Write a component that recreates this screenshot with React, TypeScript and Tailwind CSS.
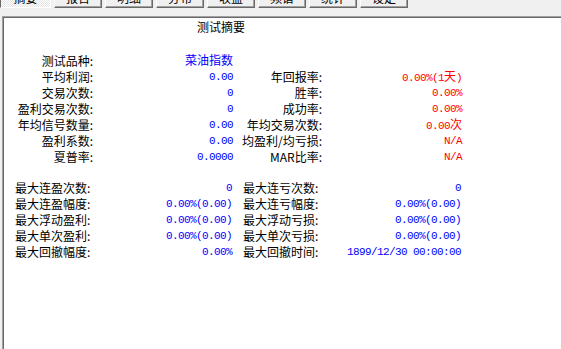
const tabs = ["摘要", "报告", "明细", "分布", "收益", "频谱", "统计", "设定"]

type Row = [string, string, string, string, "blue" | "red"]

const summary: Row[] = [
    ["测试品种:", "菜油指数", "", "", "blue"],
    ["平均利润:", "0.00", "年回报率:", "0.00%(1天)", "red"],
    ["交易次数:", "0", "胜率:", "0.00%", "red"],
    ["盈利交易次数:", "0", "成功率:", "0.00%", "red"],
    ["年均信号数量:", "0.00", "年均交易次数:", "0.00次", "red"],
    ["盈利系数:", "0.00", "均盈利/均亏损:", "N/A", "red"],
    ["夏普率:", "0.0000", "MAR比率:", "N/A", "red"],
]

const extremes: [string, string, string, string][] = [
    ["最大连盈次数:", "0", "最大连亏次数:", "0"],
    ["最大连盈幅度:", "0.00%(0.00)", "最大连亏幅度:", "0.00%(0.00)"],
    ["最大浮动盈利:", "0.00%(0.00)", "最大浮动亏损:", "0.00%(0.00)"],
    ["最大单次盈利:", "0.00%(0.00)", "最大单次亏损:", "0.00%(0.00)"],
    ["最大回撤幅度:", "0.00%", "最大回撤时间:", "1899/12/30 00:00:00"],
]

const label = "font-['Noto_Sans_CJK_SC',sans-serif] text-[12px] leading-[16px] text-black whitespace-nowrap"
const value = "font-['Liberation_Mono','Noto_Sans_CJK_SC',monospace] text-[11px] tracking-[-0.6px] leading-[16px] whitespace-nowrap text-right"

// digits stay narrow, CJK characters get their full 12px size
function Value({ text, className }: { text: string; className: string }) {
    const parts = text.split(/([\u4e00-\u9fff]+)/).filter(Boolean)
    return (
        <span className={`${value} ${className}`}>
            {parts.map((p, i) =>
                /[\u4e00-\u9fff]/.test(p) ? (
                    <span key={i} className="font-['Noto_Sans_CJK_SC',sans-serif] text-[12px] tracking-normal">
                        {p}
                    </span>
                ) : (
                    <span key={i}>{p}</span>
                )
            )}
        </span>
    )
}

function App() {
    return (
        <div className="flex h-[349px] w-[561px] flex-col overflow-hidden bg-[#f0f0f0] font-['Noto_Sans_CJK_SC',sans-serif]">
            <div className="flex h-[16px] shrink-0 gap-[3px]">
                {tabs.map((t, i) => (
                    <div
                        key={t}
                        className={
                            i === 0
                                ? "-mt-[16px] flex h-[24px] w-[51px] items-end justify-center border border-t-[#696969] border-l-[#696969] border-r-white border-b-white bg-[image:repeating-conic-gradient(#ffffff_0_25%,#e4e4e4_0_50%)] bg-[length:2px_2px] pb-[1px] text-[12px] leading-[16px] text-black"
                                : "-mt-[16px] flex h-[24px] w-[48px] items-end justify-center border border-t-white border-l-white border-r-[#696969] border-b-[#696969] bg-[#f0f0f0] pb-[1px] text-[12px] leading-[16px] text-black shadow-[inset_-1px_-1px_0_#a0a0a0]"
                        }
                    >
                        {t}
                    </div>
                ))}
            </div>
            <div className="ml-[2px] flex-1 border-t border-l border-[#a0a0a0] bg-white">
                <div className="h-full border-t border-l border-[#696969] pt-[1px]">
                    <div className={`${label} w-[434px] text-center`}>测试摘要</div>

                    <div className="mt-[18px] grid grid-cols-[89px_140px_89px_140px]">
                        {summary.map(([l1, v1, l2, v2, c]) => (
                            <div key={l1} className="contents">
                                <div className={`${label} text-right`}>{l1}</div>
                                <div className="flex h-[16px] items-center justify-end">
                                    <Value text={v1} className="text-[#0000ff]" />
                                </div>
                                <div className={`${label} text-right`}>{l2}</div>
                                <div className="flex h-[16px] items-center justify-end">
                                    <Value text={v2} className={c === "red" ? "text-[#ff0000]" : "text-[#0000ff]"} />
                                </div>
                            </div>
                        ))}
                    </div>

                    <div className="mt-[15px] grid grid-cols-[228px_218px] pl-[11px]">
                        {extremes.map(([l1, v1, l2, v2]) => (
                            <div key={l1} className="contents">
                                <div className="flex h-[16px] items-center justify-between pr-[11px]">
                                    <span className={label}>{l1}</span>
                                    <Value text={v1} className="text-[#0000ff]" />
                                </div>
                                <div className="flex h-[16px] items-center justify-between">
                                    <span className={label}>{l2}</span>
                                    <Value text={v2} className="text-[#0000ff]" />
                                </div>
                            </div>
                        ))}
                    </div>
                </div>
            </div>
        </div>
    )
}

export default App
